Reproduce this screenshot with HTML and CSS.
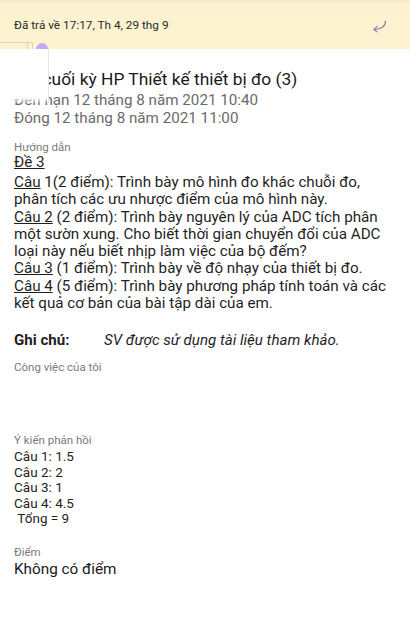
FILE: index.html
```html
<!DOCTYPE html>
<html lang="vi">
<head>
<meta charset="utf-8">
<link rel="stylesheet" href="styles.css">
</head>
<body>
<div class="banner">
  <span class="banner-text">Đã trả về 17:17, Th 4, 29 thg 9</span>
  <svg class="return-icon" width="18" height="14" viewBox="0 0 18 14">
    <path d="M15.5 2 C15.5 7 12 10 4 10.5" fill="none" stroke="#8d84a6" stroke-width="1.2" stroke-linecap="round"/>
    <path d="M7 7.5 L3.8 10.6 L7 12.8" fill="none" stroke="#8d84a6" stroke-width="1.2" stroke-linecap="round" stroke-linejoin="round"/>
  </svg>
</div>
<div class="overlay">
  <div class="overlay-tab"></div>
  <div class="overlay-dot"></div>
</div>
<main class="content">
  <section class="head">
    <h1 class="title">Thi cuối kỳ HP Thiết kế thiết bị đo (3)</h1>
    <div class="meta">Đến hạn 12 tháng 8 năm 2021 10:40</div>
    <div class="meta">Đóng 12 tháng 8 năm 2021 11:00</div>
  </section>
  <section class="guide">
    <div class="label">Hướng dẫn</div>
    <div class="exam"><u>Đề 3</u></div>
    <div class="body-text">
      <div><u>Câu</u> 1(2 điểm): Trình bày mô hình đo khác chuỗi đo,<br>phân tích các ưu nhược điểm của mô hình này.</div>
      <div><u>Câu 2</u> (2 điểm): Trình bày nguyên lý của ADC tích phân<br>một sườn xung. Cho biết thời gian chuyển đổi của ADC<br>loại này nếu biết nhịp làm việc của bộ đếm?</div>
      <div><u>Câu 3</u> (1 điểm): Trình bày về độ nhạy của thiết bị đo.</div>
      <div><u>Câu 4</u> (5 điểm): Trình bày phương pháp tính toán và các<br>kết quả cơ bản của bài tập dài của em.</div>
    </div>
    <div class="note"><b class="note-key">Ghi chú:</b><i class="note-val">SV được sử dụng tài liệu tham khảo.</i></div>
  </section>
  <section class="work">
    <div class="label">Công việc của tôi</div>
  </section>
  <section class="feedback">
    <div class="label">Ý kiến phản hồi</div>
    <div class="fb-text">
      <div>Câu 1: 1.5</div>
      <div>Câu 2: 2</div>
      <div>Câu 3: 1</div>
      <div>Câu 4: 4.5</div>
      <div>&nbsp;Tổng = 9</div>
    </div>
  </section>
  <section class="grade">
    <div class="label">Điểm</div>
    <div class="grade-val">Không có điểm</div>
  </section>
</main>
</body>
</html>
```

FILE: styles.css
```css
html, body {
  margin: 0;
  padding: 0;
  background: #ffffff;
}
body {
  font-family: Roboto, "Noto Sans", "Liberation Sans", sans-serif;
  color: #1f1f1f;
  position: relative;
  width: 410px;
  min-height: 629px;
  overflow: hidden;
}
.banner {
  height: 49px;
  background: linear-gradient(#efe6cc 0px, #fdf2cf 3px, #fef3d0 100%);
  display: flex;
  align-items: center;
  justify-content: space-between;
  padding: 0 22px 0 14px;
  box-sizing: border-box;
}
.banner-text {
  font-size: 11.8px;
  color: #2b2b2b;
}
.return-icon {
  display: block;
  margin-top: 2px;
}
.overlay {
  position: absolute;
  left: 0;
  top: 49px;
  width: 48px;
  height: 54px;
  background: linear-gradient(#ffffff 0, #ffffff 49px, rgba(255,255,255,0.6) 51px, rgba(255,255,255,0.2) 54px);
  border-right: 1px solid rgba(0,0,0,0.1);
}
.overlay-tab {
  position: absolute;
  left: 0;
  top: -7px;
  width: 33px;
  height: 7px;
  border-top: 1px solid #d8d2c4;
  border-right: 1px solid #d8d2c4;
  box-sizing: border-box;
}
.overlay-tab::after {
  content: "";
  position: absolute;
  right: 4px;
  top: 0;
  height: 6px;
  border-left: 1px solid #d8d2c4;
}
.overlay-dot {
  position: absolute;
  left: 36px;
  top: -6px;
  width: 12px;
  height: 12px;
  border-radius: 50%;
  background: #c8a8f2;
  clip-path: inset(0 0 50% 0);
}
.content {
  padding: 0 10px 0 14px;
}
.head {
  padding-top: 18px;
}
.title {
  margin: 0;
  font-size: 17.4px;
  font-weight: 400;
  line-height: 24px;
  color: #1a1a1a;
}
.meta {
  font-size: 15.2px;
  line-height: 18px;
  color: #6b6b6b;
}
.label {
  font-size: 11.5px;
  line-height: 14px;
  color: #7a7a7a;
}
.guide {
  padding-top: 14px;
}
.guide .label {
  line-height: 13px;
}
.exam {
  font-size: 15.2px;
  line-height: 17px;
  margin-bottom: 3px;
}
.body-text {
  font-size: 15.2px;
  line-height: 17.25px;
  color: #1f1f1f;
}
.note {
  margin-top: 18px;
  font-size: 15.1px;
  line-height: 20px;
  display: flex;
}
.note-key {
  width: 90px;
  font-weight: 700;
}
.note-val {
  font-style: italic;
}
.work {
  padding-top: 10px;
  padding-bottom: 59px;
}
.fb-text {
  margin-top: 2px;
  font-size: 13.5px;
  line-height: 15.6px;
  color: #1f1f1f;
}
.grade {
  padding-top: 18px;
}
.grade-val {
  font-size: 15.3px;
  line-height: 20px;
  color: #1a1a1a;
}
```
